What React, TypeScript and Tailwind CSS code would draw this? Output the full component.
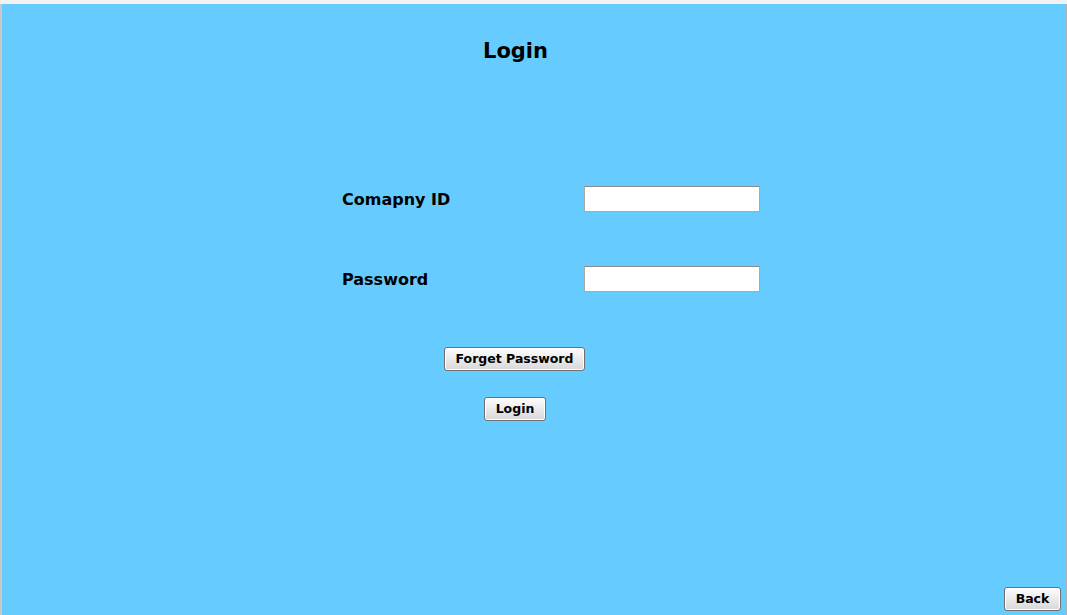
const btn =
  "h-[24px] rounded-[3px] border border-[#707070] bg-gradient-to-b from-[#fdfdfd] to-[#d8d8d8] text-[12.5px] font-bold text-black leading-none px-0 whitespace-nowrap shadow-[inset_0_0_0_1px_#ffffff]";

const App = () => {
  return (
    <div className="h-[615px] w-[1067px] flex flex-col bg-[#f0f0f0] font-['DejaVu_Sans',sans-serif] overflow-hidden">
      {/* top window strip */}
      <div className="h-[4px] bg-[#f2f2f2]" />
      <div className="flex flex-1">
        <div className="w-[2px] bg-[#c8c8c8]" />
        <main className="flex-1 bg-[#66ccff] flex flex-col">
          <div className="ml-[340px] flex flex-col items-start">
            <h1 className="pt-[35px] pl-[141px] text-[21px] font-bold leading-[25px] text-black">Login</h1>

            <div className="mt-[122px] flex items-center h-[26px]">
              <label className="w-[242px] pt-[2px] text-[16px] font-bold text-black">Comapny ID</label>
              <input className="w-[176px] h-[26px] bg-white border border-[#a9a9a9] border-t-[#8a8a8a] outline-none px-1" />
            </div>

            <div className="mt-[54px] flex items-center h-[26px]">
              <label className="w-[242px] pt-[2px] text-[16px] font-bold text-black">Password</label>
              <input type="password" className="w-[176px] h-[26px] bg-white border border-[#a9a9a9] border-t-[#8a8a8a] outline-none px-1" />
            </div>

            <button className={`${btn} mt-[55px] ml-[102px] w-[141px]`}>Forget Password</button>
            <button className={`${btn} mt-[26px] ml-[142px] w-[62px]`}>Login</button>
          </div>

          <button className={`${btn} mt-auto mb-[4px] mr-[5px] self-end w-[57px]`}>Back</button>
        </main>
        <div className="w-[1px] bg-[#b0b0b0]" />
      </div>
    </div>
  );
};

export default App;
